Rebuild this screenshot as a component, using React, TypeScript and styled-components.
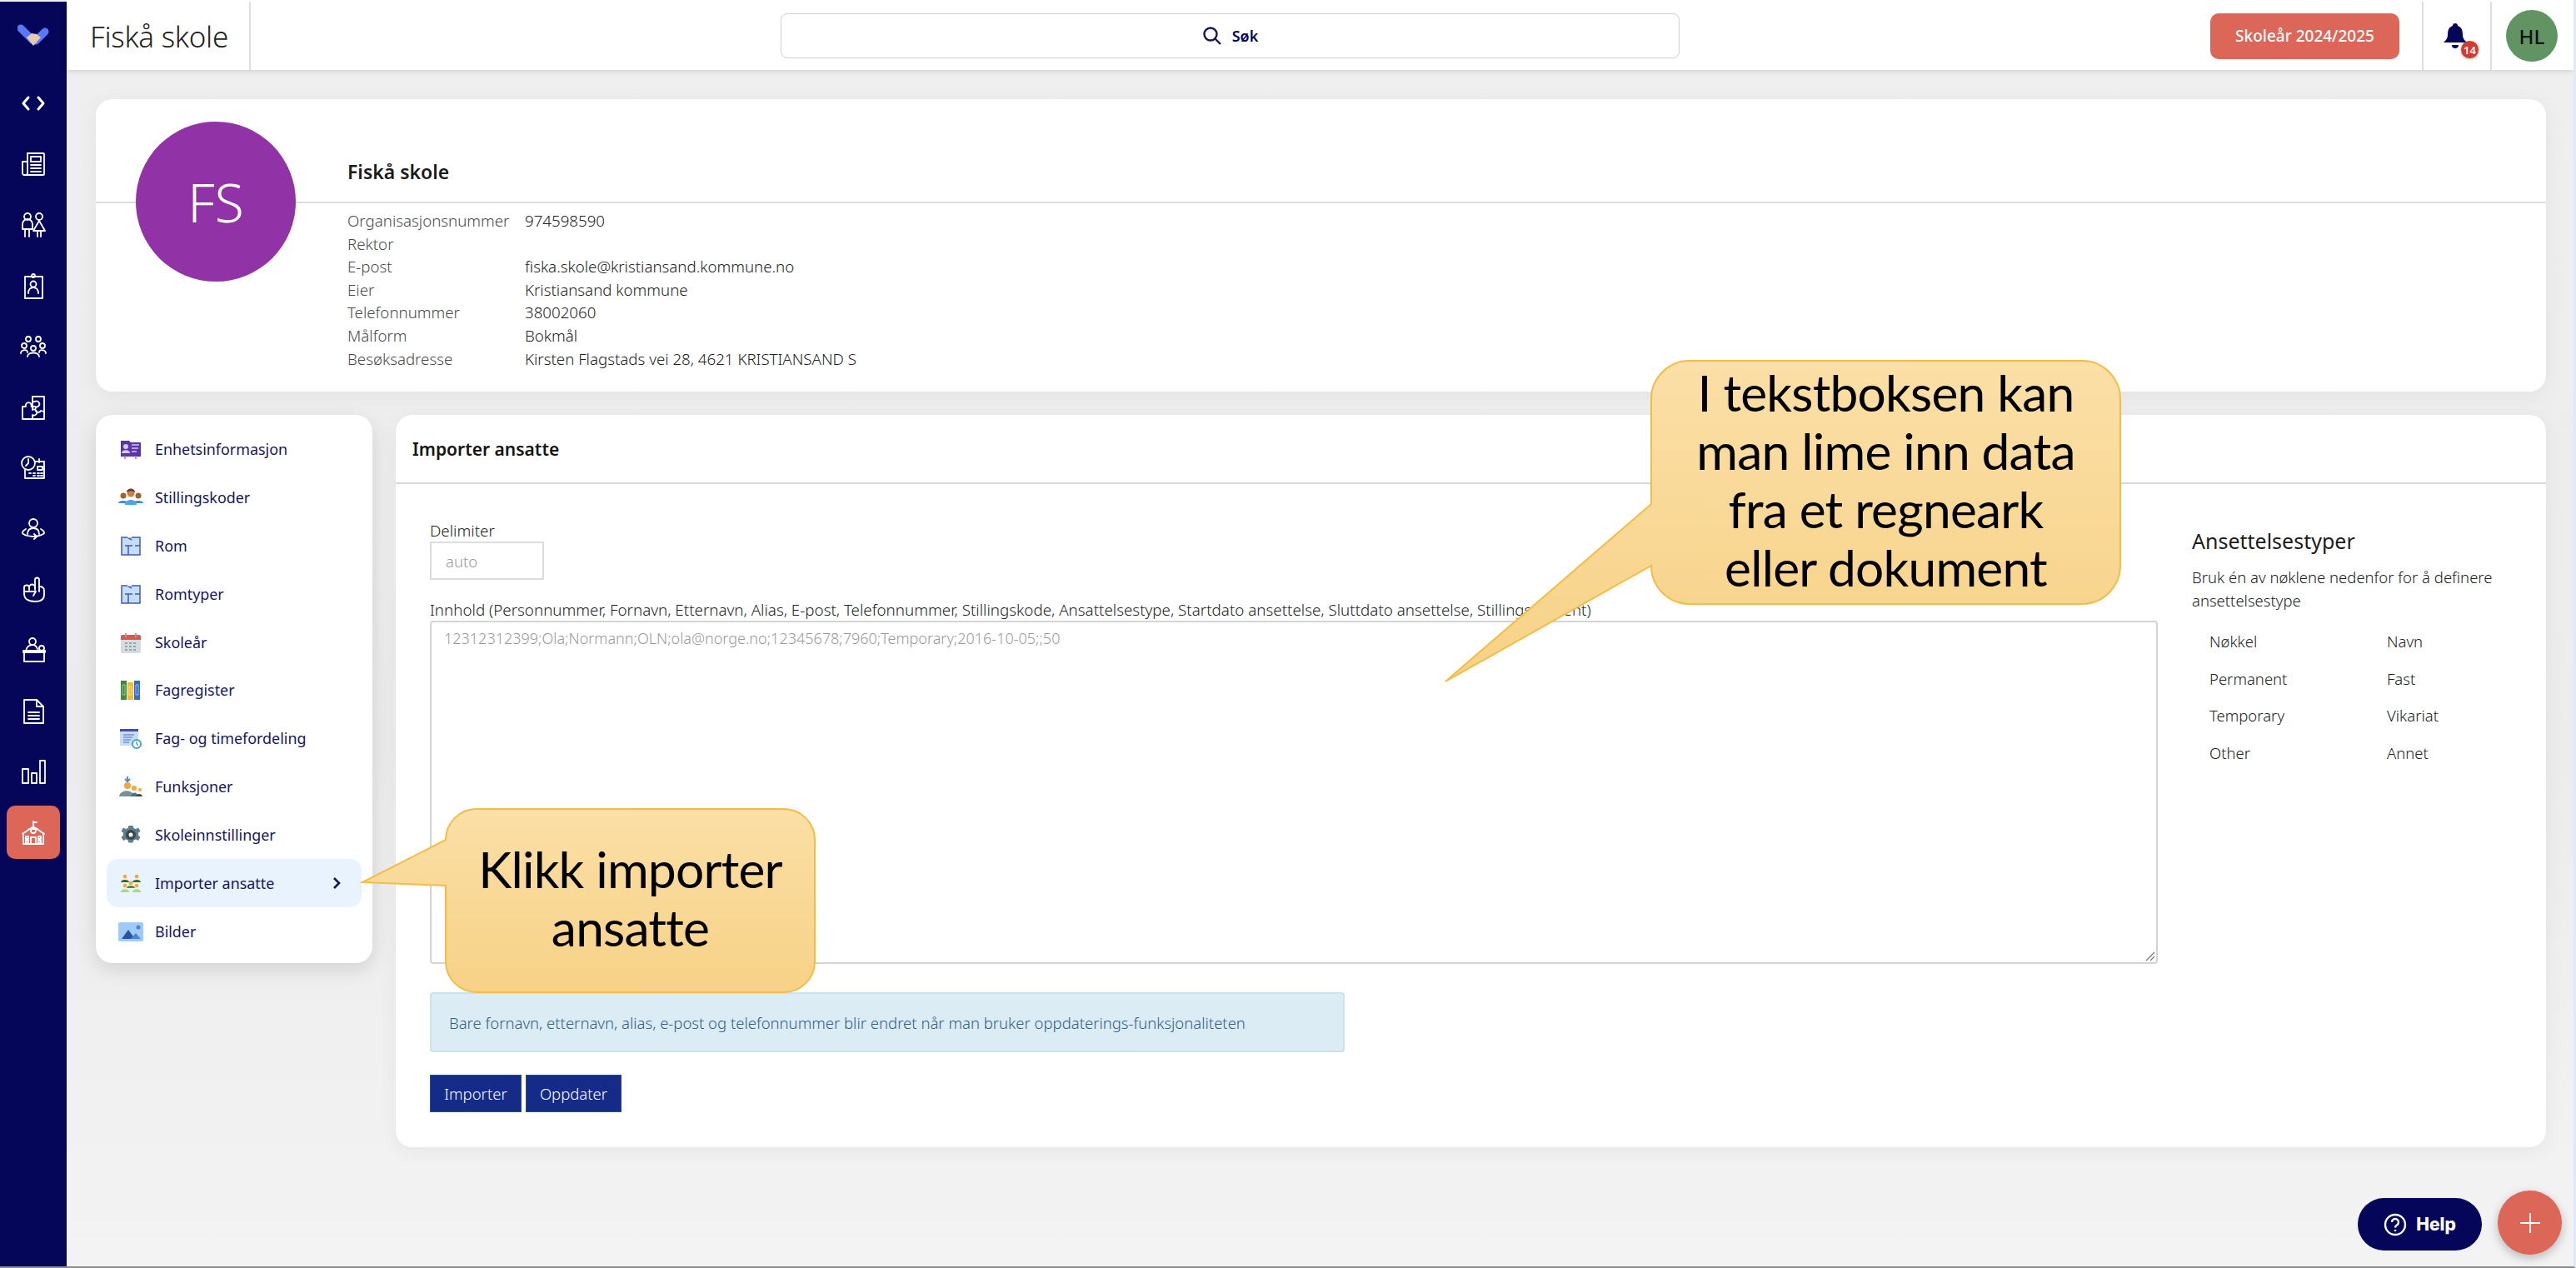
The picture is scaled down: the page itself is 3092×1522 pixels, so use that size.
import React from "react";
import styled, { createGlobalStyle } from "styled-components";

const Global = createGlobalStyle`
  html, body { margin: 0; padding: 0; background: #f0f0f0; }
  * { box-sizing: border-box; }
  body { font-family: "Noto Sans", "Open Sans", sans-serif; }
`;

const Page = styled.div`
  position: relative;
  width: 3092px;
  height: 1522px;
  display: flex;
  overflow: hidden;
  background: linear-gradient(#efefef, #ececec 60%, #f3f3f3);
  border-bottom: 2px solid #8c8c8c;
  border-right: 3px solid #dfe9fb;
`;

const Rail = styled.nav`
  width: 80px;
  flex: none;
  margin-top: 2px;
  background: #05055a;
  display: flex;
  flex-direction: column;
  align-items: center;
`;

const RailLogo = styled.div`
  height: 82px;
  display: flex;
  align-items: center;
  justify-content: center;
  margin-bottom: 8px;
`;

const RailItem = styled.div<{ $active?: boolean }>`
  width: 64px;
  height: 64px;
  margin-bottom: 8.95px;
  display: flex;
  align-items: center;
  justify-content: center;
  border-radius: 10px;
  background: ${(p) => (p.$active ? "#dc6657" : "transparent")};
  svg {
    width: 32px;
    height: 32px;
    fill: none;
    stroke: #fff;
    stroke-width: 1.8;
    stroke-linecap: round;
    stroke-linejoin: round;
  }
`;

const Column = styled.div`
  flex: 1;
  min-width: 0;
  display: flex;
  flex-direction: column;
`;

const Header = styled.header`
  height: 84px;
  flex: none;
  padding-top: 2px;
  background: #fff;
  display: flex;
  box-shadow: 0 2px 6px rgba(0, 0, 0, 0.12);
`;

const HeaderTitle = styled.div`
  width: 221px;
  flex: none;
  display: flex;
  align-items: center;
  padding-left: 28px;
  border-right: 2px solid #dedede;
  font-size: 35px;
  font-weight: 300;
  color: #222;
  letter-spacing: -0.3px;
`;

const HeaderMiddle = styled.div`
  flex: 1;
  display: flex;
  align-items: center;
  padding-left: 636px;
`;

const SearchBox = styled.div`
  width: 1079px;
  height: 54px;
  border: 1.5px solid #d0d0d0;
  border-radius: 8px;
  display: flex;
  align-items: center;
  justify-content: center;
  gap: 12px;
  font-size: 18px;
  font-weight: 600;
  color: #05055a;
  svg {
    width: 24px;
    height: 24px;
  }
`;

const YearSlot = styled.div`
  flex: none;
  display: flex;
  align-items: center;
  padding-right: 27px;
  border-right: 2px solid #dedede;
`;

const YearButton = styled.div`
  width: 227px;
  height: 55px;
  border-radius: 10px;
  background: #dc6657;
  color: #fff;
  display: flex;
  align-items: center;
  justify-content: center;
  font-size: 19px;
  font-weight: 500;
`;

const BellSlot = styled.div`
  position: relative;
  width: 82px;
  flex: none;
  display: flex;
  align-items: center;
  justify-content: center;
  padding-right: 4px;
  border-right: 2px solid #dedede;
`;

const BellBadge = styled.span`
  position: absolute;
  left: 45px;
  top: 47px;
  width: 21px;
  height: 21px;
  border-radius: 50%;
  background: #d23c2e;
  color: #fff;
  font-size: 13px;
  font-weight: 600;
  display: flex;
  align-items: center;
  justify-content: center;
  box-shadow: 0 1px 3px rgba(0, 0, 0, 0.35);
`;

const AvatarSlot = styled.div`
  width: 98px;
  flex: none;
  display: flex;
  align-items: center;
  padding-left: 17px;
`;

const UserAvatar = styled.div`
  width: 62px;
  height: 62px;
  border-radius: 50%;
  background: #629463;
  color: #111;
  font-size: 24px;
  font-weight: 500;
  display: flex;
  align-items: center;
  justify-content: center;
`;

const Content = styled.main`
  flex: 1;
  display: flex;
  flex-direction: column;
  gap: 28px;
  padding: 35px 33px 0 35px;
`;

const Card = styled.section`
  background: #fff;
  border-radius: 20px;
  box-shadow: 0 4px 24px rgba(0, 0, 0, 0.05);
`;

const ProfileCard = styled(Card)`
  position: relative;
  height: 351px;
`;

const ProfileCircle = styled.div`
  position: absolute;
  left: 48px;
  top: 27px;
  width: 192px;
  height: 192px;
  border-radius: 50%;
  background: #9133a6;
  color: #fff;
  font-size: 64px;
  font-weight: 300;
  display: flex;
  align-items: center;
  justify-content: center;
`;

const ProfileHead = styled.div`
  height: 125px;
  padding: 68px 0 0 302px;
  border-bottom: 2px solid #dcdcdc;
  font-size: 23px;
  font-weight: 600;
  line-height: 38px;
  color: #1b1b1b;
`;

const InfoGrid = styled.dl`
  margin: 0;
  padding: 7px 0 0 302px;
  display: grid;
  grid-template-columns: 213px 1fr;
  grid-auto-rows: 27.6px;
  font-size: 18.7px;
  font-weight: 300;
  line-height: 27.6px;
`;

const InfoLabel = styled.dt`
  color: #4a4a4a;
`;

const InfoValue = styled.dd`
  margin: 0;
  color: #222;
`;

const Lower = styled.div`
  display: grid;
  grid-template-columns: 332px 1fr;
  gap: 28px;
  align-items: start;
`;

const Menu = styled(Card)`
  height: 658px;
  padding: 12px 13px 0;
  box-shadow: 0 8px 24px rgba(0, 0, 0, 0.12);
`;

const MenuRow = styled.div<{ $active?: boolean }>`
  height: 57.9px;
  padding: 0 14px;
  display: flex;
  align-items: center;
  gap: 14px;
  border-radius: 14px;
  font-size: 17.9px;
  color: #16165f;
  background: ${(p) => (p.$active ? "#e8f3fd" : "transparent")};
  svg.menu-icon {
    width: 30px;
    height: 30px;
    flex: none;
  }
`;

const MenuChevron = styled.svg`
  width: 20px;
  height: 20px;
  margin-left: auto;
  margin-right: 6px;
`;

const ImportCard = styled(Card)`
  height: 879px;
`;

const ImportHead = styled.h2`
  margin: 0;
  height: 83px;
  padding-left: 20px;
  display: flex;
  align-items: center;
  border-bottom: 2px solid #d8d8d8;
  font-size: 21px;
  font-weight: 600;
  color: #151515;
`;

const ImportBody = styled.div`
  display: grid;
  grid-template-columns: 2074px 1fr;
  gap: 41px;
  padding: 43px 0 0 41px;
`;

const Field = styled.div`
  display: flex;
  flex-direction: column;
`;

const FieldLabel = styled.label`
  font-size: 18.8px;
  font-weight: 300;
  line-height: 26px;
  white-space: nowrap;
  color: #222;
`;

const DelimiterInput = styled.div`
  width: 137px;
  height: 46px;
  margin-bottom: 23px;
  padding-left: 17px;
  display: flex;
  align-items: center;
  border: 2px solid #dcdcdc;
  font-size: 18.5px;
  font-weight: 300;
  color: #9a9a9a;
`;

const ContentArea = styled.div`
  position: relative;
  height: 412px;
  padding: 6px 15px;
  border: 2px solid #d4d4d4;
  border-radius: 4px;
  font-size: 18px;
  font-weight: 300;
  line-height: 27px;
  color: #9a9a9a;
`;

const ResizeGrip = styled.svg`
  position: absolute;
  right: 1px;
  bottom: 1px;
  width: 14px;
  height: 14px;
`;

const Alert = styled.div`
  width: 1098px;
  height: 72px;
  margin-top: 34px;
  padding-left: 21px;
  display: flex;
  align-items: center;
  background: #dcecf4;
  border: 2px solid #cbe4ec;
  border-radius: 4px;
  font-size: 18.5px;
  font-weight: 300;
  color: #2f6188;
`;

const ButtonRow = styled.div`
  margin-top: 27px;
  display: flex;
  gap: 5px;
`;

const ActionButton = styled.div<{ $w: number }>`
  width: ${(p) => p.$w}px;
  height: 45px;
  display: flex;
  align-items: center;
  justify-content: center;
  background: #142c87;
  border: 1px solid #2c4a97;
  color: #fff;
  font-size: 18.5px;
  font-weight: 300;
`;

const TypesPanel = styled.div`
  padding-top: 8px;
`;

const TypesTitle = styled.h3`
  margin: 0;
  font-size: 25px;
  font-weight: 400;
  line-height: 34px;
  color: #1c1c1c;
`;

const TypesIntro = styled.p`
  margin: 13px 0 13px;
  width: 400px;
  font-size: 18.5px;
  font-weight: 300;
  line-height: 28px;
  color: #222;
`;

const TypesTable = styled.div`
  display: grid;
  grid-template-columns: 213px 1fr;
  grid-auto-rows: 44.5px;
  padding-left: 21px;
  font-size: 18.5px;
  font-weight: 300;
  line-height: 44.5px;
  color: #222;
`;

const Callout = styled.div<{ $x: number; $y: number; $w: number; $h: number }>`
  position: absolute;
  left: ${(p) => p.$x}px;
  top: ${(p) => p.$y}px;
  width: ${(p) => p.$w}px;
  height: ${(p) => p.$h}px;
`;

const CalloutShape = styled.svg`
  position: absolute;
  inset: 0;
  width: 100%;
  height: 100%;
`;

const CalloutText = styled.div<{ $left: number; $top: number; $w: number }>`
  position: absolute;
  left: ${(p) => p.$left}px;
  top: ${(p) => p.$top}px;
  width: ${(p) => p.$w}px;
  text-align: center;
  font-family: "Lato", "Noto Sans", sans-serif;
  font-size: 60.5px;
  line-height: 70px;
  letter-spacing: -0.8px;
  color: #000;
`;

const HelpButton = styled.div`
  position: absolute;
  left: 2830px;
  top: 1438px;
  width: 149px;
  height: 63px;
  border-radius: 32px;
  background: #05055a;
  color: #fff;
  display: flex;
  align-items: center;
  justify-content: center;
  gap: 11px;
  font-family: "Inter", sans-serif;
  font-size: 21px;
  font-weight: 800;
  svg {
    width: 28px;
    height: 28px;
  }
`;

const PlusButton = styled.div`
  position: absolute;
  left: 2998px;
  top: 1429px;
  width: 77px;
  height: 77px;
  border-radius: 50%;
  background: #dc6657;
  display: flex;
  align-items: center;
  justify-content: center;
  box-shadow: 0 4px 12px rgba(0, 0, 0, 0.25);
  svg {
    width: 26px;
    height: 26px;
  }
`;

const railIcons: React.ReactNode[] = [
  <>
    <path d="M10 9l-6 7 6 7M22 9l6 7-6 7" strokeWidth="3" />
  </>,
  <>
    <path d="M9 3h19a1 1 0 0 1 1 1v24a1 1 0 0 1-1 1H5a2 2 0 0 1-2-2V13h6" />
    <path d="M9 3v24a2 2 0 0 1-2 2" />
    <rect x="13" y="7" width="12" height="6" />
    <path d="M13 17h12M13 21h12M13 25h12" />
  </>,
  <>
    <circle cx="9" cy="6" r="4" />
    <circle cx="23" cy="6" r="4" />
    <path d="M3 21v-6a6 6 0 0 1 12 0v6H3zM6 21v9M11 21v9" />
    <path d="M23 11l-7 12h14l-7-12zM21 23v7M25 23v7" />
  </>,
  <>
    <rect x="6" y="5" width="21" height="26" />
    <circle cx="16" cy="4" r="2" />
    <circle cx="16" cy="14" r="3.5" />
    <path d="M10 25c0-5 3-7 6-7s6 2 6 7" />
  </>,
  <>
    <circle cx="10" cy="7" r="3" />
    <circle cx="22" cy="7" r="3" />
    <circle cx="5" cy="15" r="3" />
    <circle cx="27" cy="15" r="3" />
    <circle cx="16" cy="18" r="3" />
    <path d="M1 24c0-4 8-6 8-1M31 24c0-4-8-6-8-1M9 28c0-6 14-6 14 0" />
  </>,
  <>
    <path d="M15 3h14v27H3V15h4a3.500 3.500 0 1 1 6.500 0H15V3z" />
    <path d="M15 15v4a3.500 3.500 0 1 1 0 6v5M15 9h3a3.500 3.500 0 1 1 0 6h-3M21 15a3.500 3.500 0 1 0 4 5l4 1" />
  </>,
  <>
    <circle cx="10" cy="10" r="8" />
    <path d="M10 5v5l-3 3" />
    <path d="M18 8h11v20H6V18" />
    <path d="M23 5v4M11 22h2M16 22h2M21 22h2M25 22h2M16 25h2M21 25h2M25 25h2M21 14h6v4h-6z" />
  </>,
  <>
    <circle cx="16" cy="9" r="5" />
    <path d="M9 22c0-5 3-7 7-7s7 2 7 7" />
    <path d="M7 16c-4 2-5 5-3 6 3 2 10 3 15 3M25 16c4 2 5 5 3 6-2 1-4 2-7 2.500M17 22l3 3-3 3" />
  </>,
  <>
    <path d="M18 14V4a2.500 2.500 0 0 1 5 0v14" />
    <path d="M23 12c3 0 6 1 6 5v5c0 6-5 8-11 8s-13-2-13-9v-7" />
    <path d="M5 14a3 3 0 0 1 6-1v3M11 13a3 3 0 0 1 7 0v3" />
    <path d="M5 18h14l-3 5" />
  </>,
  <>
    <circle cx="15" cy="6" r="4" />
    <path d="M7 18c0-5 4-8 8-8s5 2 6 5" />
    <path d="M4 17h26v2H4zM5 19h24v11H5z" />
    <circle cx="26" cy="14" r="3" />
  </>,
  <>
    <path d="M5 3h15l8 8v20H5V3z" />
    <path d="M20 3v8h8M10 18h13M10 22h13M10 26h13" />
  </>,
  <>
    <rect x="3" y="13" width="7" height="17" />
    <rect x="14" y="18" width="6" height="12" />
    <rect x="24" y="3" width="6" height="27" />
  </>,
  <>
    <path d="M3 18L16 9l13 9M16 9V3M4 17v13h24V17M16 4h4" />
    <path d="M11 12h10" />
    <circle cx="16" cy="14" r="3" />
    <path d="M13 30v-8h6v8M7 21h3v3H7zM7 26h3v3H7zM22 21h3v3h-3zM22 26h3v3h-3z" />
  </>,
];

const Id = () => (
  <svg className="menu-icon" viewBox="0 0 30 30">
    <path d="M3 5h10l2 2h11a1 1 0 0 1 1 1v16H3z" fill="#5b35a8" />
    <circle cx="9" cy="12" r="3" fill="#d6c8ee" />
    <path d="M4 20c0-5 10-5 10 0z" fill="#d6c8ee" />
    <path d="M16 10h9M16 14h8M16 18h6" stroke="#d6c8ee" strokeWidth="1.500" />
    <path d="M8 27v-4M21 27v-4" stroke="#8f72cf" strokeWidth="1.500" />
  </svg>
);
const Team = () => (
  <svg className="menu-icon" viewBox="0 0 30 30">
    <circle cx="6" cy="13" r="3.500" fill="#a4622b" />
    <circle cx="24" cy="13" r="3.500" fill="#a4622b" />
    <path d="M0 22c0-4 12-4 12 0zM18 22c0-4 12-4 12 0z" fill="#3c8ce0" />
    <circle cx="15" cy="10" r="4.500" fill="#c9814c" />
    <path d="M10 9c0-6 10-6 10 0-3-2-7-2-10 0z" fill="#6c3d1e" />
    <path d="M8 24c0-8 14-8 14 0z" fill="#4ea3ec" />
  </svg>
);
const Room = () => (
  <svg className="menu-icon" viewBox="0 0 30 30">
    <rect x="4" y="5" width="22" height="21" fill="#c3def8" stroke="#4759b0" strokeWidth="1.500" />
    <path d="M11 5l5 3M20 15h6M8 15h9M12 15v11" stroke="#4759b0" strokeWidth="1.500" fill="none" />
    <path d="M11 4h5v1.500h-5z" fill="#fff" />
  </svg>
);
const Calendar = () => (
  <svg className="menu-icon" viewBox="0 0 30 30">
    <rect x="3" y="6" width="24" height="22" rx="2" fill="#d5dbde" />
    <path d="M3 8a2 2 0 0 1 2-2h20a2 2 0 0 1 2 2v4H3z" fill="#e0574a" />
    <path d="M9 4v5M21 4v5" stroke="#9aa3a7" strokeWidth="2" />
    <path d="M8 15h3v2H8zM13 15h3v2h-3zM18 15h3v2h-3zM8 19h3v2H8zM13 19h3v2h-3zM18 19h3v2h-3zM8 23h3v2H8zM13 23h3v2h-3zM18 23h3v2h-3z" fill="#99a4a9" />
  </svg>
);
const Books = () => (
  <svg className="menu-icon" viewBox="0 0 30 30">
    <rect x="3" y="4" width="7" height="23" fill="#3d8b3d" />
    <rect x="11" y="6" width="7" height="21" fill="#f7b733" />
    <rect x="19" y="4" width="7" height="23" fill="#2f6fc0" />
    <path d="M5 9h3v12H5zM13 11h3v10h-3zM21 9h3v12h-3z" fill="none" stroke="#fff" strokeOpacity=".5" />
  </svg>
);
const Schedule = () => (
  <svg className="menu-icon" viewBox="0 0 30 30">
    <rect x="2" y="5" width="22" height="19" fill="#c7dcf6" />
    <rect x="2" y="4" width="22" height="3" fill="#3f51b5" />
    <path d="M6 11h13M6 14h11M6 17h9M6 20h7" stroke="#4a6fc0" strokeWidth="1.200" />
    <circle cx="22" cy="22" r="5" fill="#fff" stroke="#3ea7c2" strokeWidth="2" />
    <path d="M22 19v3l2 2" stroke="#455a64" strokeWidth="1" fill="none" />
  </svg>
);
const Functions = () => (
  <svg className="menu-icon" viewBox="0 0 30 30">
    <path d="M11 3v5M8 6l3 3 3-3" stroke="#3f93ea" strokeWidth="2" fill="none" />
    <circle cx="11" cy="14" r="4" fill="#f5a636" />
    <circle cx="19" cy="17" r="3" fill="#f5a636" />
    <circle cx="26" cy="19" r="2" fill="#f5a636" />
    <path d="M1 27c1-9 17-9 18 0z" fill="#78909c" />
    <path d="M15 27c1-6 8-6 9 0z" fill="#546e7a" />
    <path d="M21 27c1-4 7-4 8 0z" fill="#37474f" />
  </svg>
);
const Gear = () => (
  <svg className="menu-icon" viewBox="0 0 30 30">
    <path
      d="M12.500 4h5l1 3 2.500 1 3-1.500 2.500 4.300-2.500 2c.2 1 .2 2 0 3l2.500 2-2.500 4.300-3-1.500-2.500 1-1 3h-5l-1-3-2.500-1-3 1.500-2.500-4.300 2.500-2c-.2-1-.2-2 0-3l-2.500-2L6 6.500l3 1.500 2.500-1z"
      fill="#607d8b"
    />
    <circle cx="15" cy="15" r="6" fill="#37474f" />
    <circle cx="15" cy="15" r="2.500" fill="#fff" />
  </svg>
);
const Staff = () => (
  <svg className="menu-icon" viewBox="0 0 30 30">
    <circle cx="8" cy="7" r="2.300" fill="#f5a636" />
    <circle cx="22" cy="7" r="2.300" fill="#f5a636" />
    <path d="M3 14c0-4 10-4 10 0zM17 14c0-4 10-4 10 0z" fill="#33691e" />
    <circle cx="15" cy="15" r="2.300" fill="#f5a636" />
    <path d="M10 21c0-4 10-4 10 0z" fill="#558b2f" />
    <circle cx="8" cy="18" r="2.300" fill="#f5a636" />
    <circle cx="22" cy="18" r="2.300" fill="#f5a636" />
    <path d="M3 26c0-5 10-5 10 0zM17 26c0-5 10-5 10 0z" fill="#aed581" />
  </svg>
);
const Picture = () => (
  <svg className="menu-icon" viewBox="0 0 30 30">
    <rect x="0" y="4" width="30" height="23" rx="2" fill="#9fcbf7" />
    <path d="M4 24l8-11 8 11z" fill="#2a539e" />
    <path d="M15 24l6-7 6 7z" fill="#4b84d8" />
    <circle cx="24" cy="10" r="2.500" fill="#3f83e0" />
  </svg>
);

const menuItems: { label: string; icon: React.ReactNode; active?: boolean }[] = [
  { label: "Enhetsinformasjon", icon: <Id /> },
  { label: "Stillingskoder", icon: <Team /> },
  { label: "Rom", icon: <Room /> },
  { label: "Romtyper", icon: <Room /> },
  { label: "Skoleår", icon: <Calendar /> },
  { label: "Fagregister", icon: <Books /> },
  { label: "Fag- og timefordeling", icon: <Schedule /> },
  { label: "Funksjoner", icon: <Functions /> },
  { label: "Skoleinnstillinger", icon: <Gear /> },
  { label: "Importer ansatte", icon: <Staff />, active: true },
  { label: "Bilder", icon: <Picture /> },
];

const info: [string, string][] = [
  ["Organisasjonsnummer", "974598590"],
  ["Rektor", ""],
  ["E-post", "fiska.skole@kristiansand.kommune.no"],
  ["Eier", "Kristiansand kommune"],
  ["Telefonnummer", "38002060"],
  ["Målform", "Bokmål"],
  ["Besøksadresse", "Kirsten Flagstads vei 28, 4621 KRISTIANSAND S"],
];

const types: [string, string][] = [
  ["Nøkkel", "Navn"],
  ["Permanent", "Fast"],
  ["Temporary", "Vikariat"],
  ["Other", "Annet"],
];

const calloutStroke = "#f3bd45";

export default function App() {
  return (
    <Page>
      <Global />
      <Rail>
        <RailLogo>
          <svg width="38" height="28" viewBox="0 0 38 28">
            <path d="M4 5l14 14" stroke="#5878f5" strokeWidth="9" strokeLinecap="round" />
            <path d="M33 9L22 20" stroke="#5878f5" strokeWidth="9" strokeLinecap="round" />
            <path d="M11 16l6-5 6 1 5 4-9 10z" fill="#e8c8ae" />
          </svg>
        </RailLogo>
        {railIcons.map((icon, i) => (
          <RailItem key={i} $active={i === railIcons.length - 1}>
            <svg viewBox="0 0 32 32">{icon}</svg>
          </RailItem>
        ))}
      </Rail>
      <Column>
        <Header>
          <HeaderTitle>Fiskå skole</HeaderTitle>
          <HeaderMiddle>
            <SearchBox>
              <svg viewBox="0 0 24 24" fill="none" stroke="#14145f" strokeWidth="2.400">
                <circle cx="10" cy="10" r="7.500" />
                <path d="M15.500 15.500L22 22" />
              </svg>
              Søk
            </SearchBox>
          </HeaderMiddle>
          <YearSlot>
            <YearButton>Skoleår 2024/2025</YearButton>
          </YearSlot>
          <BellSlot>
            <svg width="32" height="34" viewBox="0 0 32 34">
              <path d="M16 2a3 3 0 0 1 3 3c5 1.500 6 6 6 11 0 4 2 6 5 9H2c3-3 5-5 5-9 0-5 1-9.500 6-11a3 3 0 0 1 3-3z" fill="#05055a" />
              <path d="M12 28h8a4 4 0 0 1-8 0z" fill="#05055a" />
            </svg>
            <BellBadge>14</BellBadge>
          </BellSlot>
          <AvatarSlot>
            <UserAvatar>HL</UserAvatar>
          </AvatarSlot>
        </Header>
        <Content>
          <ProfileCard>
            <ProfileHead>Fiskå skole</ProfileHead>
            <ProfileCircle>FS</ProfileCircle>
            <InfoGrid>
              {info.map(([k, v]) => (
                <React.Fragment key={k}>
                  <InfoLabel>{k}</InfoLabel>
                  <InfoValue>{v}</InfoValue>
                </React.Fragment>
              ))}
            </InfoGrid>
          </ProfileCard>
          <Lower>
            <Menu as="aside">
              {menuItems.map((m) => (
                <MenuRow key={m.label} $active={m.active}>
                  {m.icon}
                  {m.label}
                  {m.active && (
                    <MenuChevron viewBox="0 0 20 20" fill="none" stroke="#14145f" strokeWidth="2.600">
                      <path d="M7 4l6 6-6 6" />
                    </MenuChevron>
                  )}
                </MenuRow>
              ))}
            </Menu>
            <ImportCard>
              <ImportHead>Importer ansatte</ImportHead>
              <ImportBody>
                <Field>
                  <FieldLabel>Delimiter</FieldLabel>
                  <DelimiterInput>auto</DelimiterInput>
                  <FieldLabel>
                    Innhold (Personnummer, Fornavn, Etternavn, Alias, E-post, Telefonnummer, Stillingskode, Ansattelsestype, Startdato ansettelse, Sluttdato ansettelse, Stillingsprosent)
                  </FieldLabel>
                  <ContentArea>
                    12312312399;Ola;Normann;OLN;ola@norge.no;12345678;7960;Temporary;2016-10-05;;50
                    <ResizeGrip viewBox="0 0 14 14" stroke="#777" strokeWidth="1.200">
                      <path d="M13 3L3 13M13 8l-5 5" />
                    </ResizeGrip>
                  </ContentArea>
                  <Alert>Bare fornavn, etternavn, alias, e-post og telefonnummer blir endret når man bruker oppdaterings-funksjonaliteten</Alert>
                  <ButtonRow>
                    <ActionButton $w={110}>Importer</ActionButton>
                    <ActionButton $w={115}>Oppdater</ActionButton>
                  </ButtonRow>
                </Field>
                <TypesPanel>
                  <TypesTitle>Ansettelsestyper</TypesTitle>
                  <TypesIntro>Bruk én av nøklene nedenfor for å definere ansettelsestype</TypesIntro>
                  <TypesTable>
                    {types.map(([a, b]) => (
                      <React.Fragment key={a}>
                        <span>{a}</span>
                        <span>{b}</span>
                      </React.Fragment>
                    ))}
                  </TypesTable>
                </TypesPanel>
              </ImportBody>
            </ImportCard>
          </Lower>
        </Content>
      </Column>

      <Callout $x={1730} $y={428} $w={820} $h={396}>
        <CalloutShape viewBox="0 0 820 396">
          <defs>
            <linearGradient id="calloutA" x1="0" y1="0" x2="0" y2="1">
              <stop offset="0" stopColor="#fbdfa6" />
              <stop offset="1" stopColor="#f7d287" />
            </linearGradient>
          </defs>
          <path
            d="M298 5H769a46 46 0 0 1 46 46V251a46 46 0 0 1-46 46H298a46 46 0 0 1-46-46L5 390 252 177V51a46 46 0 0 1 46-46z"
            fill="url(#calloutA)"
            stroke={calloutStroke}
            strokeWidth="2"
          />
        </CalloutShape>
        <CalloutText $left={252} $top={8} $w={563}>
          I tekstboksen kan
          <br />
          man lime inn data
          <br />
          fra et regneark
          <br />
          eller dokument
        </CalloutText>
      </Callout>

      <Callout $x={430} $y={966} $w={552} $h={230}>
        <CalloutShape viewBox="0 0 552 230">
          <path
            d="M142 5H511a37 37 0 0 1 37 37V188a37 37 0 0 1-37 37H142a37 37 0 0 1-37-37V97L5 93 105 42a37 37 0 0 1 37-37z"
            fill="url(#calloutA)"
            stroke={calloutStroke}
            strokeWidth="2"
          />
        </CalloutShape>
        <CalloutText $left={105} $top={42} $w={443}>
          Klikk importer
          <br />
          ansatte
        </CalloutText>
      </Callout>

      <HelpButton>
        <svg viewBox="0 0 28 28" fill="none" stroke="#fff" strokeWidth="2.400">
          <circle cx="14" cy="14" r="12" />
          <path d="M10 11a4 4 0 1 1 6 3.500c-1.500 1-2 1.500-2 3" />
          <path d="M14 20v2" />
        </svg>
        Help
      </HelpButton>
      <PlusButton>
        <svg viewBox="0 0 26 26" stroke="#fff" strokeWidth="1.800">
          <path d="M13 1v24M1 13h24" />
        </svg>
      </PlusButton>
    </Page>
  );
}
